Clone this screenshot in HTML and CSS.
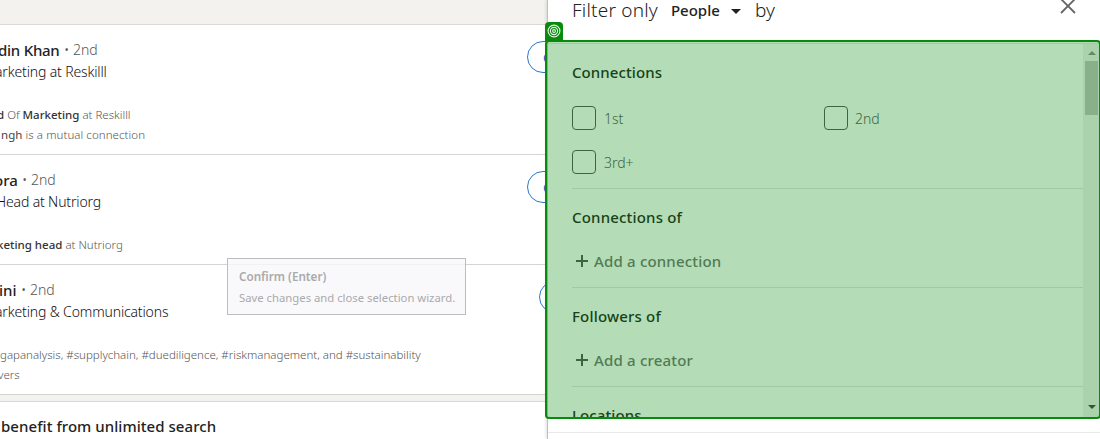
FILE: index.html
```html
<!DOCTYPE html>
<html lang="en">
<head>
<meta charset="utf-8">
<title>Search filters</title>
<link rel="stylesheet" href="styles.css">
</head>
<body>
<div class="page">
  <main class="results">
    <div class="results-top"></div>
    <article class="result">
      <div class="info">
        <div class="name"><b class="n1">din Khan</b><span class="degree">• 2nd</span></div>
        <div class="headline h1">arketing at Reskilll</div>
        <div class="snippet s1"><b>d</b> Of <b>Marketing</b> at Reskilll</div>
        <div class="line s2"><span class="dark">ngh</span> is a mutual connection</div>
      </div>
      <div class="pill">C</div>
    </article>
    <article class="result">
      <div class="info">
        <div class="name"><b class="n2">ora</b><span class="degree">• 2nd</span></div>
        <div class="headline h2">Head at Nutriorg</div>
        <div class="snippet s3"><b>keting head</b> at Nutriorg</div>
      </div>
      <div class="pill">C</div>
    </article>
    <article class="result last">
      <div class="info">
        <div class="name"><b class="n3">ini</b><span class="degree">• 2nd</span></div>
        <div class="headline h3">arketing &amp; Communications</div>
        <div class="snippet s4">gapanalysis, #supplychain, #duediligence, #riskmanagement, and #sustainability</div>
        <div class="line s5">vers</div>
      </div>
      <div class="pill"></div>
    </article>
    <div class="promo">benefit from unlimited search</div>
  </main>
  <aside class="panel">
    <header class="panel-head">
      <span class="title">Filter only</span>
      <span class="kind">People</span>
      <svg class="caret" width="10" height="5" viewBox="0 0 10 5"><path d="M0 0h10L5 5z" fill="#222"/></svg>
      <span class="title by">by</span>
      <svg class="close" width="16" height="16" viewBox="0 0 16 16"><path d="M1 1l14 14M15 1L1 15" stroke="#666" stroke-width="1.8"/></svg>
    </header>
    <div class="panel-body">
      <div class="filters">
        <section class="first">
          <h3 class="t1">Connections</h3>
          <div class="checks">
            <label><i></i><span>1st</span></label>
            <label><i></i><span>2nd</span></label>
            <label><i></i><span>3rd+</span></label>
          </div>
        </section>
        <section>
          <h3>Connections of</h3>
          <div class="add"><svg width="12" height="12" viewBox="0 0 12 12"><path d="M6 0v12M0 6h12" stroke="#555" stroke-width="2"/></svg><span>Add a connection</span></div>
        </section>
        <section>
          <h3>Followers of</h3>
          <div class="add"><svg width="12" height="12" viewBox="0 0 12 12"><path d="M6 0v12M0 6h12" stroke="#555" stroke-width="2"/></svg><span>Add a creator</span></div>
        </section>
        <section>
          <h3 class="t1">Locations</h3>
        </section>
      </div>
      <div class="scrollbar">
        <svg width="8" height="4" viewBox="0 0 8 4"><path d="M4 0l4 4H0z" fill="#8b8b8b"/></svg>
        <div class="thumb"></div>
        <svg class="down" width="8" height="4" viewBox="0 0 8 4"><path d="M0 0h8L4 4z" fill="#404040"/></svg>
      </div>
    </div>
    <footer class="panel-foot"></footer>
  </aside>
  <div class="selection"></div>
  <div class="badge">
    <svg width="14" height="14" viewBox="0 0 14 14" fill="none" stroke="#e4f5e4" stroke-width="1.1"><circle cx="7" cy="7" r="5.9"/><circle cx="7" cy="7" r="3.6"/><circle cx="7" cy="7" r="1.4"/></svg>
  </div>
  <div class="tooltip"><b>Confirm (Enter)</b><span>Save changes and close selection wizard.</span></div>
</div>
</body>
</html>
```
FILE: styles.css
```css
* { box-sizing: border-box; }
body { margin: 0; background: #fff; font-family: "Noto Sans", "Open Sans", sans-serif; }
.page { position: relative; display: flex; width: 1100px; height: 439px; overflow: hidden; }
.results { width: 548px; height: 439px; overflow: hidden; white-space: nowrap; }
.results-top { height: 25px; background: #f3f2ef; border-bottom: 1px solid #dbd9d7; }
.result { display: flex; align-items: flex-start; padding: 14px 0 9px; border-bottom: 1px solid #d4d4d4; }
.info { flex: 0 0 527px; }
.last .info { flex-basis: 539px; }
.name { display: flex; height: 22px; line-height: 22px; font-size: 15px; color: #222; }
.name b { flex: none; font-weight: 500; }
.n1 { width: 66px; margin-left: -2px; letter-spacing: -.25px; }
.n2 { width: 28px; margin-left: -6px; }
.n3 { width: 22px; margin-left: -1px; }
.degree { font-size: 14px; font-weight: 300; color: #555; }
.headline { height: 22px; line-height: 22px; font-size: 14px; font-weight: 300; color: #111; letter-spacing: -.15px; }
.h1, .h3 { margin-left: -5px; }
.h2 { margin-left: -4px; }
.snippet, .line { height: 20px; line-height: 20px; font-size: 11.5px; font-weight: 300; color: #555; }
.snippet { margin-top: 22px; }
.snippet b { font-weight: 500; color: #333; }
.dark { color: #444; font-weight: 400; }
.s1 { margin-left: -3px; }
.s2 { padding-left: 1px; letter-spacing: .07px; }
.s3 { margin-left: -3px; }
.s5 { margin-left: -2px; }
.pill { flex: none; width: 100px; height: 32px; margin-top: 2px; padding-left: 15px; border: 1px solid #2b78cc; border-radius: 16px; line-height: 30px; font-size: 15px; font-weight: 600; color: #0a66c2; }
.promo { height: 60px; border-top: 6px solid #f3f2ef; box-shadow: inset 0 1px #dbd9d7; padding-left: 1px; line-height: 50px; font-size: 15px; font-weight: 500; letter-spacing: .05px; color: #222; }
.panel { position: relative; width: 553px; height: 439px; margin-left: -1px; background: #fff; border-left: 1px solid #bfbfbf; box-shadow: -1px 0 3px rgba(0,0,0,.12); }
.panel-head { display: flex; align-items: center; height: 44px; padding: 0 24px 24px; border-bottom: 1px solid #e4e4e4; }
.title { font-size: 19px; font-weight: 300; letter-spacing: .2px; color: #222; line-height: 22px; }
.kind { margin-left: 13px; width: 60px; font-size: 15px; font-weight: 500; color: #222; line-height: 22px; }
.caret { margin-top: 3px; }
.by { margin-left: 14px; }
.close { margin: -8px 0 0 auto; }
.panel-body { display: flex; height: 373px; overflow: hidden; }
.filters { flex: 1; padding-left: 24px; }
section { padding: 18px 0 16px; border-bottom: 1px solid #e4e4e4; }
.first { padding-bottom: 14px; }
h3 { margin: 0; height: 20px; line-height: 20px; font-size: 15px; font-weight: 500; letter-spacing: .18px; color: #222; }
.t1 { letter-spacing: .08px; }
.checks { display: grid; grid-template-columns: 252px 1fr; gap: 20px 0; margin-top: 24px; }
.checks label { display: flex; align-items: center; gap: 8px; height: 24px; font-size: 14px; font-weight: 300; color: #555; }
.checks label:nth-child(2) { gap: 7px; }
.checks i { width: 24px; height: 24px; border: 1px solid #555; border-radius: 4px; }
.add { display: flex; align-items: center; gap: 6px; height: 20px; margin-top: 24px; padding-left: 4px; font-size: 15px; font-weight: 500; letter-spacing: .18px; color: #737373; }
.scrollbar { display: flex; flex-direction: column; align-items: center; width: 17px; padding: 7px 0 8px; background: #f1f1f1; }
.thumb { width: 13px; height: 54px; margin-top: 6px; background: #c1c1c1; }
.down { margin-top: auto; }
.panel-foot { height: 16px; border-bottom: 1px solid #e8e8e8; }
.selection { position: absolute; left: 545px; top: 40px; width: 556px; height: 379px; border: 2px solid #088a0c; border-radius: 4px; background: rgba(8,140,12,.3); }
.badge { position: absolute; left: 545px; top: 22px; width: 18px; height: 19px; padding: 2px; border-radius: 4px 4px 0 0; background: #088a0c; }
.badge svg { display: block; }
.tooltip { position: absolute; left: 227px; top: 258px; width: 239px; height: 57px; padding: 7px 11px; display: flex; flex-direction: column; border: 1px solid #bdbdc0; background: rgba(247,247,251,.8); white-space: nowrap; font-size: 11.3px; line-height: 21px; color: #aaa; }
.tooltip b { font-size: 11.7px; font-weight: 600; }
```
